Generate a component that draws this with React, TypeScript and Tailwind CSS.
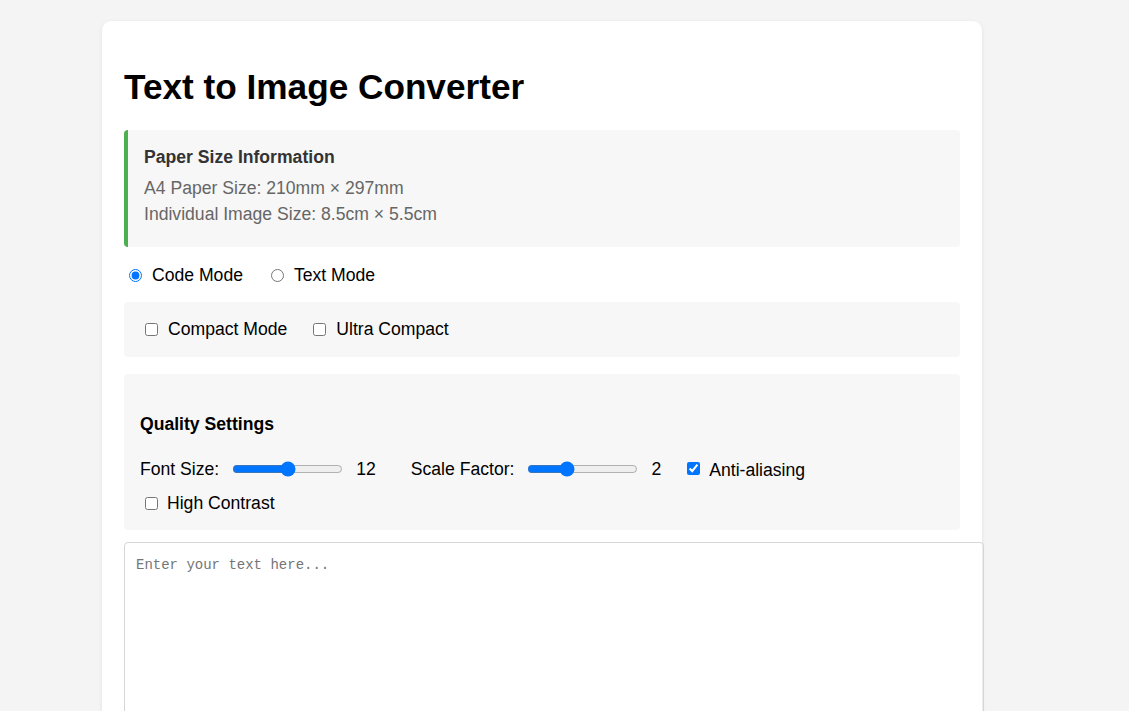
import React from "react";

export default function App() {
  return (
    <div className="min-h-screen bg-[#f4f4f4] pt-[21px] pl-[102px] font-['Liberation_Sans',Arial,sans-serif] text-black">
      <div className="w-[880px] min-h-[720px] rounded-[9px] bg-white px-[22px] pt-[22px] shadow-[0_1px_4px_rgba(0,0,0,0.08)]">
        <h1 className="mt-[24px] mb-[23px] text-[35.2px] font-bold leading-[40px]">Text to Image Converter</h1>

        <div className="rounded-[4px] border-l-[4px] border-[#4caf50] bg-[#f7f7f7] pt-[17px] pb-[20px] pl-[16px]">
          <div className="mb-[8px] text-[17.6px] font-bold leading-[20px] text-[#333]">Paper Size Information</div>
          <div className="text-[17.6px] leading-[26px] text-[#666]">A4 Paper Size: 210mm × 297mm</div>
          <div className="text-[17.6px] leading-[26px] text-[#666]">Individual Image Size: 8.5cm × 5.5cm</div>
        </div>

        <div className="mt-[16px] flex h-[24px] items-center text-[17.6px]">
          <input type="radio" name="mode" defaultChecked className="ml-[5px] mr-[10px] h-[13px] w-[13px] m-0" />
          <span className="mr-[28px]">Code Mode</span>
          <input type="radio" name="mode" className="mr-[10px] h-[13px] w-[13px] m-0" />
          <span>Text Mode</span>
        </div>

        <div className="mt-[15px] flex h-[55px] items-center rounded-[4px] bg-[#f7f7f7] pl-[21px] text-[17.6px]">
          <input type="checkbox" className="m-0 mr-[10px] h-[13px] w-[13px]" />
          <span className="mr-[26px]">Compact Mode</span>
          <input type="checkbox" className="m-0 mr-[10px] h-[13px] w-[13px]" />
          <span>Ultra Compact</span>
        </div>

        <div className="mt-[17px] rounded-[4px] bg-[#f7f7f7] pl-[16px] pt-[40px] pb-[15px] text-[17.6px]">
          <div className="font-bold leading-[20px]">Quality Settings</div>
          <div className="mt-[23px] flex h-[24px] items-center">
            <span>Font Size:</span>
            <input type="range" min={6} max={18} defaultValue={12} className="m-0 ml-[13px] w-[111px]" />
            <span className="ml-[13px]">12</span>
            <span className="ml-[35px]">Scale Factor:</span>
            <input type="range" min={1} max={4} defaultValue={2} className="m-0 ml-[13px] w-[111px]" />
            <span className="ml-[13px]">2</span>
            <input type="checkbox" defaultChecked className="m-0 ml-[26px] mr-[9px] h-[13px] w-[13px] translate-y-[-1px]" />
            <span className="translate-y-[1px]">Anti-aliasing</span>
          </div>
          <div className="mt-[10px] flex h-[24px] items-center">
            <input type="checkbox" className="m-0 ml-[5px] mr-[9px] h-[13px] w-[13px]" />
            <span>High Contrast</span>
          </div>
        </div>

        <textarea
          placeholder="Enter your text here..."
          className="mt-[12px] box-content block h-[300px] w-[836px] resize-none rounded-[4px] border border-[#d6d6d6] px-[11px] pt-[13px] pb-[11px] font-['Liberation_Mono',monospace] text-[14px] leading-[18px] outline-none placeholder:text-[#757575]"
        />
      </div>
    </div>
  );
}
